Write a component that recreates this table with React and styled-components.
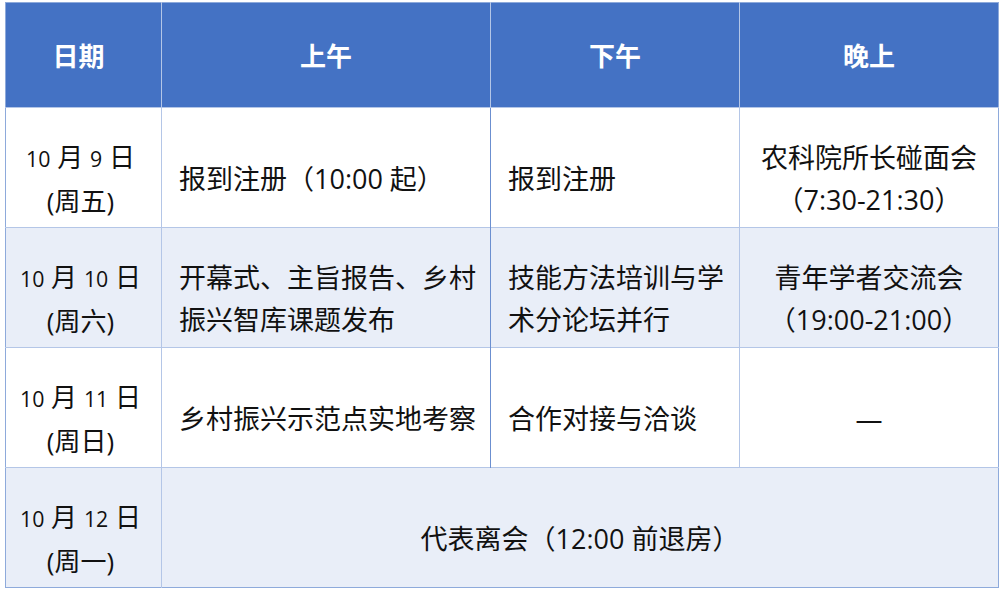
import React from 'react';
import styled, { createGlobalStyle } from 'styled-components';

const GlobalStyle = createGlobalStyle`
  html, body {
    margin: 0;
    padding: 0;
    background: #ffffff;
  }
  body {
    font-family: "Open Sans", "Noto Sans CJK SC", sans-serif;
    color: #111111;
  }
`;

const Page = styled.div`
  width: 1000px;
  height: 591px;
  padding: 2px 2px 0 5px;
  box-sizing: border-box;
`;

const Table = styled.table`
  width: 993px;
  border-collapse: collapse;
  table-layout: fixed;
  border: 1.5px solid #8eaadb;
`;

const HeadCell = styled.th`
  height: 104px;
  background: #4472c4;
  color: #ffffff;
  font-size: 26px;
  font-weight: 700;
  text-align: center;
  border-left: 1.5px solid #b4c6e7;
  padding: 0;
  &:first-child {
    border-left: none;
    padding-right: 10px;
  }
`;

const Row = styled.tr`
  height: 120px;
  background: ${(p) => (p.$shaded ? '#e9eef8' : '#ffffff')};
  border-top: 1.5px solid #b4c6e7;
`;

const Cell = styled.td`
  font-size: 27px;
  line-height: 42px;
  text-align: ${(p) => (p.$center ? 'center' : 'left')};
  padding: ${(p) => (p.$center ? '22px 4px 0' : '22px 6px 0 17px')};
  border-left: 1.5px solid ${(p) => (p.$strong ? '#6b8fd0' : '#b4c6e7')};
  vertical-align: middle;
  &:first-child {
    border-left: none;
  }
`;

const DateCell = styled(Cell)`
  font-size: 26px;
  text-align: center;
  padding: 22px 6px 0 0;
`;

const Num = styled.span`
  font-size: 0.82em;
`;

const rows = [
  {
    day: '9',
    week: '周五',
    am: '报到注册（10:00 起）',
    pm: '报到注册',
    eve: ['农科院所长碰面会', '（7:30-21:30）'],
  },
  {
    day: '10',
    week: '周六',
    am: '开幕式、主旨报告、乡村振兴智库课题发布',
    pm: '技能方法培训与学术分论坛并行',
    eve: ['青年学者交流会', '（19:00-21:00）'],
    shaded: true,
  },
  {
    day: '11',
    week: '周日',
    am: '乡村振兴示范点实地考察',
    pm: '合作对接与洽谈',
    eve: ['—'],
  },
];

const DateText = ({ day, week }) => (
  <>
    <Num>10</Num> 月 <Num>{day}</Num> 日
    <br />({week})
  </>
);

export default function App() {
  return (
    <Page>
      <GlobalStyle />
      <Table>
        <colgroup>
          <col style={{ width: 156 }} />
          <col style={{ width: 329 }} />
          <col style={{ width: 249 }} />
          <col style={{ width: 259 }} />
        </colgroup>
        <thead>
          <tr>
            <HeadCell>日期</HeadCell>
            <HeadCell>上午</HeadCell>
            <HeadCell>下午</HeadCell>
            <HeadCell>晚上</HeadCell>
          </tr>
        </thead>
        <tbody>
          {rows.map((r) => (
            <Row key={r.day} $shaded={r.shaded}>
              <DateCell>
                <DateText day={r.day} week={r.week} />
              </DateCell>
              <Cell>{r.am}</Cell>
              <Cell $strong>{r.pm}</Cell>
              <Cell $center>
                {r.eve.map((line, i) => (
                  <div key={i}>{line}</div>
                ))}
              </Cell>
            </Row>
          ))}
          <Row $shaded>
            <DateCell>
              <DateText day="12" week="周一" />
            </DateCell>
            <Cell $center colSpan={3}>
              代表离会（12:00 前退房）
            </Cell>
          </Row>
        </tbody>
      </Table>
    </Page>
  );
}
